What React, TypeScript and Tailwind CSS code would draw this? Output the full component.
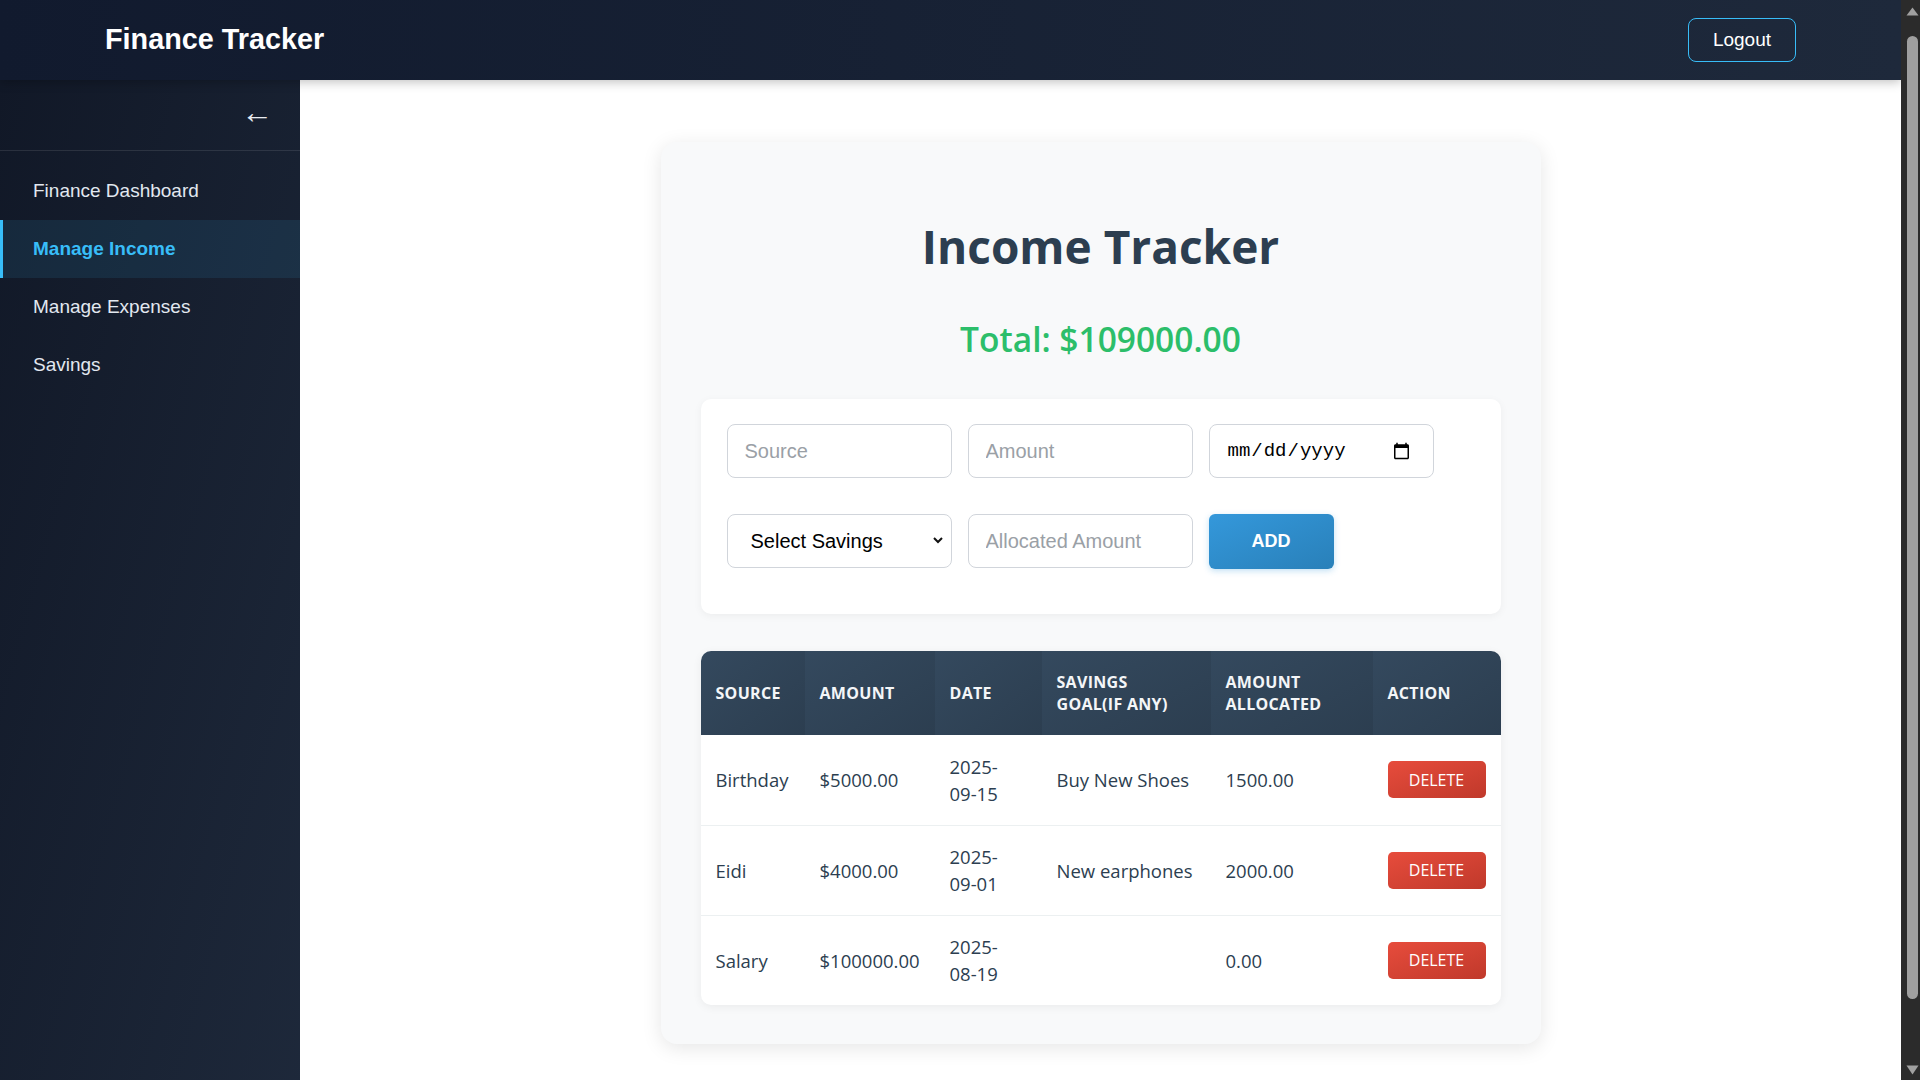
import React from "react";

const arial = "font-['Liberation_Sans',Arial,sans-serif]";
const segoe = "font-['Open_Sans','Segoe_UI',sans-serif]";

const rows = [
  { source: "Birthday", amount: "$5000.00", d1: "2025-", d2: "09-15", goal: "Buy New Shoes", alloc: "1500.00" },
  { source: "Eidi", amount: "$4000.00", d1: "2025-", d2: "09-01", goal: "New earphones", alloc: "2000.00" },
  { source: "Salary", amount: "$100000.00", d1: "2025-", d2: "08-19", goal: "", alloc: "0.00" },
];

function Th({ children }: { children: React.ReactNode }) {
  return (
    <th className="bg-gradient-to-br from-[#34495e] to-[#2c3e50] text-left align-middle px-[15px] h-[84px] text-[16px] font-bold uppercase tracking-[0.3px] leading-[22.5px] text-[#f4f6f8]">
      {children}
    </th>
  );
}

function Scrollbar() {
  return (
    <div className="w-[19px] shrink-0 h-screen bg-[#2b2b2b] flex flex-col items-center">
      <svg className="mt-[7px] ml-[4px]" width="13" height="9" viewBox="0 0 13 9">
        <path d="M6.5 0.5L12.5 8.5H0.5Z" fill="#a0a0a0" />
      </svg>
      <div className="mt-[20px] ml-[4px] w-[11px] h-[963px] rounded-t-[6px] rounded-b-[6px] bg-[#9f9f9f]" />
      <div className="flex-1" />
      <svg className="mb-[5px] ml-[4px]" width="13" height="10" viewBox="0 0 13 10">
        <path d="M0.5 0.5H12.5L6.5 9.5Z" fill="#a0a0a0" />
      </svg>
    </div>
  );
}

export default function App() {
  const inputCls = `${arial} w-[225px] h-[54px] border border-[#d1d5db] rounded-[8px] px-[17px] text-[20px] text-black bg-white outline-none placeholder:text-[#9aa0a6]`;
  const tdCls = "px-[15px] h-[90px] align-middle text-[18.5px] leading-[27px] text-[#2c3e50]";
  return (
    <div className="h-screen overflow-hidden flex bg-white">
      <div className="flex-1 min-w-0 h-screen overflow-hidden">
        <header className="relative z-10 h-[80px] flex items-center justify-between bg-gradient-to-r from-[#111a2e] to-[#1e293b] px-[105px] shadow-[0_2px_10px_rgba(0,0,0,0.25)]">
          <h1 className={`${arial} text-[28.8px] font-bold text-white`}>Finance Tracker</h1>
          <button className={`${arial} h-[44px] px-[24px] border border-[#38bdf8] rounded-[8px] text-[19px] text-white`}>
            Logout
          </button>
        </header>
        <div className="flex min-h-[1080px]">
          <aside className={`${arial} w-[300px] shrink-0 bg-gradient-to-br from-[#111827] to-[#1e293b]`}>
            <div className="h-[71px] flex items-center justify-end pr-[27px] border-b border-white/10">
              <span className="text-[32px] text-[#e8ecf1] leading-none -mt-[6px]">←</span>
            </div>
            <nav className="pt-[11px] flex flex-col">
              <div className="h-[58px] flex items-center pl-[33px] text-[19px] text-[#e2e8f0]">Finance Dashboard</div>
              <div className="h-[58px] flex items-center pl-[30px] border-l-[3px] border-[#38bdf8] bg-[#38bdf8]/10 text-[19px] font-bold text-[#38bdf8]">
                Manage Income
              </div>
              <div className="h-[58px] flex items-center pl-[33px] text-[19px] text-[#e2e8f0]">Manage Expenses</div>
              <div className="h-[58px] flex items-center pl-[33px] text-[19px] text-[#e2e8f0]">Savings</div>
            </nav>
          </aside>
          <main className="flex-1 min-w-0 pt-[62px]">
            <div className={`${segoe} mx-auto w-[880px] bg-[#f8f9fa] rounded-[16px] shadow-[0_4px_20px_rgba(0,0,0,0.1)] px-[40px] pt-[73px] pb-[39px]`}>
              <h2 className="text-center text-[46px] font-bold leading-[62px] text-[#2c3e50]">Income Tracker</h2>
              <div className="mt-[41px] text-center text-[33.5px] font-semibold leading-[43px] text-[#2cbe6a]">Total: $109000.00</div>
              <div className="mt-[38px] bg-white rounded-[10px] shadow-[0_2px_8px_rgba(0,0,0,0.05)] pt-[25px] pb-[45px] px-[26px]">
                <div className="flex gap-[16px]">
                  <input placeholder="Source" className={inputCls} />
                  <input placeholder="Amount" className={inputCls} />
                  <input
                    type="date"
                    className="font-['Liberation_Mono',monospace] w-[225px] h-[54px] border border-[#d1d5db] rounded-[8px] pl-[17px] pr-[20px] text-[19px] text-black bg-white outline-none"
                  />
                </div>
                <div className="flex gap-[16px] mt-[36px]">
                  <div className="relative w-[225px] h-[54px]">
                    <select
                      className={`${arial} appearance-none w-full h-full border border-[#d1d5db] rounded-[8px] pl-[23px] pr-[30px] text-[20px] text-black bg-white outline-none`}
                      defaultValue=""
                    >
                      <option value="">Select Savings</option>
                    </select>
                    <svg className="pointer-events-none absolute right-[9px] top-[23px]" width="10" height="7" viewBox="0 0 10 7">
                      <path d="M1 1l4 4 4-4" stroke="#111" strokeWidth="2" fill="none" />
                    </svg>
                  </div>
                  <input placeholder="Allocated Amount" className={inputCls} />
                  <button className={`${arial} w-[125px] h-[55px] rounded-[6px] bg-gradient-to-br from-[#3498db] to-[#2980b9] text-white text-[18px] font-bold shadow-[0_2px_6px_rgba(52,152,219,0.3)]`}>
                    ADD
                  </button>
                </div>
              </div>
              <div className="mt-[37px] rounded-[10px] overflow-hidden bg-white shadow-[0_2px_10px_rgba(0,0,0,0.06)]">
                <table className="w-full table-fixed border-collapse">
                  <colgroup>
                    <col className="w-[104px]" />
                    <col className="w-[130px]" />
                    <col className="w-[107px]" />
                    <col className="w-[169px]" />
                    <col className="w-[162px]" />
                    <col className="w-[128px]" />
                  </colgroup>
                  <thead>
                    <tr>
                      <Th>Source</Th>
                      <Th>Amount</Th>
                      <Th>Date</Th>
                      <Th>
                        Savings
                        <br />
                        Goal(If Any)
                      </Th>
                      <Th>
                        Amount
                        <br />
                        Allocated
                      </Th>
                      <Th>Action</Th>
                    </tr>
                  </thead>
                  <tbody>
                    {rows.map((r, i) => (
                      <tr key={r.source} className={i < rows.length - 1 ? "border-b border-[#ecf0f1]" : ""}>
                        <td className={`${tdCls} whitespace-nowrap`}>{r.source}</td>
                        <td className={`${tdCls} whitespace-nowrap`}>{r.amount}</td>
                        <td className={tdCls}>
                          <span className="block">{r.d1}</span>
                          <span className="block">{r.d2}</span>
                        </td>
                        <td className={`${tdCls} whitespace-nowrap`}>{r.goal}</td>
                        <td className={`${tdCls} whitespace-nowrap`}>{r.alloc}</td>
                        <td className="px-[15px] h-[90px] align-middle">
                          <button className="w-[98px] h-[37px] rounded-[5px] bg-gradient-to-br from-[#e74c3c] to-[#c0392b] text-white text-[16px] leading-none">
                            DELETE
                          </button>
                        </td>
                      </tr>
                    ))}
                  </tbody>
                </table>
              </div>
            </div>
          </main>
        </div>
      </div>
      <Scrollbar />
    </div>
  );
}
